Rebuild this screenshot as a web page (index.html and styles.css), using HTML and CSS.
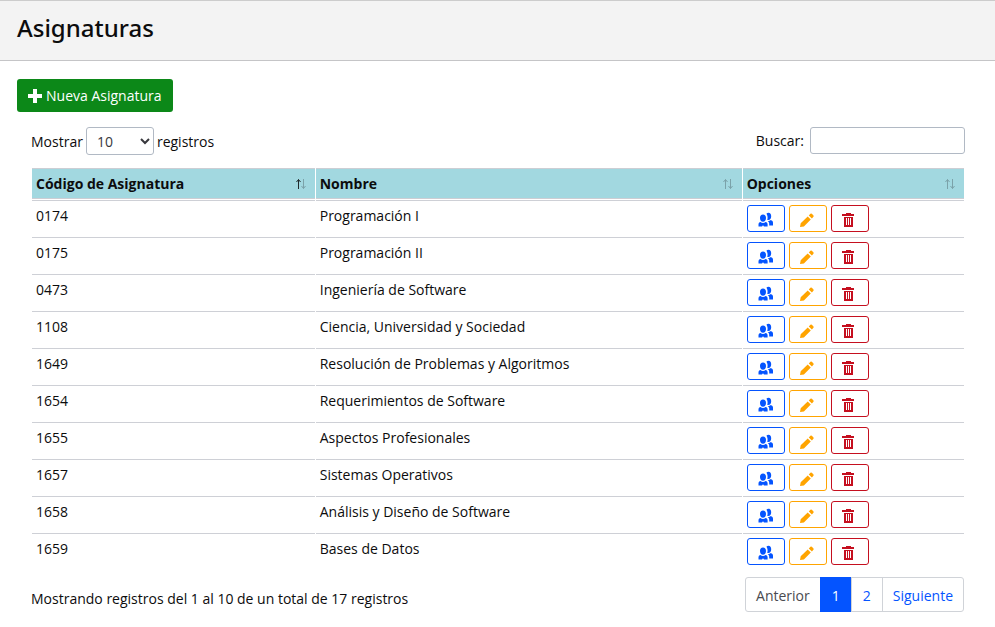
FILE: index.html
```html
<!DOCTYPE html>
<html lang="es">
<head>
<meta charset="utf-8">
<title>Asignaturas</title>
<link rel="stylesheet" href="styles.css">
</head>
<body>
<svg class="sprite" aria-hidden="true">
  <symbol id="users" viewBox="0 0 16 16"><path d="M5 2.4C6.9 2.4 8 3.8 8 5.9C8 8 6.8 9.8 5 9.8C3.2 9.8 2 8 2 5.9C2 3.8 3.1 2.4 5 2.4ZM8.4 1.7C9 1.1 9.7.8 10.5.8C12.2.8 13.2 2.2 13.2 4.2C13.2 6.3 12.1 8 10.4 8C10 8 9.6 7.9 9.2 7.7C9.5 7 9.6 6.4 9.6 5.7C9.6 4 9.2 2.6 8.4 1.7ZM.5 14.5V12.2C.5 11 1.3 10.2 2.5 10C3.2 10.7 4 11.1 5 11.1C6 11.1 6.8 10.7 7.5 10C8.9 10.3 9.6 11 9.6 12.2V14.5H6L5 13.2L4 14.5ZM11.2 13.6V11.8C11.2 10.6 10.7 9.8 9.8 9.2C11.1 9.2 12 8.8 12.7 8.1C14.2 8.5 15 9.3 15 10.8V13.6Z"/></symbol>
  <symbol id="pencil" viewBox="0 0 16 16"><path d="M0 15L.7 11.2L7.7 4.4L10.8 7.5L3.9 14.5ZM8.8 3.4L10.4 1.8Q11.1 1.1 11.8 1.8L13.5 3.5Q14 4.2 13.4 4.8L11.9 6.4Z"/></symbol>
  <symbol id="trash" viewBox="0 0 16 16"><path fill-rule="evenodd" d="M4 1H9V2H12V4H0V2H4ZM2 5H11V15H2ZM4 6V13H5V6ZM6 6V13H7V6ZM8 6V13H9V6Z"/></symbol>
  <symbol id="sort" viewBox="0 0 12 12"><path class="up" d="M3.5 11V1.5M1.5 4L3.5 1.5L5.5 4"/><path class="down" d="M8.5 1V10.5M6.5 8L8.5 10.5L10.5 8"/></symbol>
</svg>
<header class="page-header"><h1>Asignaturas</h1></header>
<main>
  <button class="new" type="button"><svg viewBox="0 0 14 14" aria-hidden="true"><path d="M5 0H9V5H14V9H9V14H5V9H0V5H5Z"/></svg>Nueva Asignatura</button>
  <section class="list">
    <div class="tools">
      <label>Mostrar <select><option>10</option><option>25</option><option>50</option></select> registros</label>
      <label class="search">Buscar: <input type="search"></label>
    </div>
    <table>
      <colgroup><col class="code"><col class="name"><col class="options"></colgroup>
      <thead><tr>
        <th class="sorted"><div>Código de Asignatura<svg><use href="#sort"/></svg></div></th>
        <th><div>Nombre<svg><use href="#sort"/></svg></div></th>
        <th><div>Opciones<svg><use href="#sort"/></svg></div></th>
      </tr></thead>
      <tbody>
        <tr><td>0174</td><td>Programación I</td><td><div class="actions"><button class="blue" aria-label="Usuarios"><svg><use href="#users"/></svg></button><button class="orange" aria-label="Editar"><svg><use href="#pencil"/></svg></button><button class="red" aria-label="Eliminar"><svg><use href="#trash"/></svg></button></div></td></tr>
        <tr><td>0175</td><td>Programación II</td><td><div class="actions"><button class="blue" aria-label="Usuarios"><svg><use href="#users"/></svg></button><button class="orange" aria-label="Editar"><svg><use href="#pencil"/></svg></button><button class="red" aria-label="Eliminar"><svg><use href="#trash"/></svg></button></div></td></tr>
        <tr><td>0473</td><td>Ingeniería de Software</td><td><div class="actions"><button class="blue" aria-label="Usuarios"><svg><use href="#users"/></svg></button><button class="orange" aria-label="Editar"><svg><use href="#pencil"/></svg></button><button class="red" aria-label="Eliminar"><svg><use href="#trash"/></svg></button></div></td></tr>
        <tr><td>1108</td><td>Ciencia, Universidad y Sociedad</td><td><div class="actions"><button class="blue" aria-label="Usuarios"><svg><use href="#users"/></svg></button><button class="orange" aria-label="Editar"><svg><use href="#pencil"/></svg></button><button class="red" aria-label="Eliminar"><svg><use href="#trash"/></svg></button></div></td></tr>
        <tr><td>1649</td><td>Resolución de Problemas y Algoritmos</td><td><div class="actions"><button class="blue" aria-label="Usuarios"><svg><use href="#users"/></svg></button><button class="orange" aria-label="Editar"><svg><use href="#pencil"/></svg></button><button class="red" aria-label="Eliminar"><svg><use href="#trash"/></svg></button></div></td></tr>
        <tr><td>1654</td><td>Requerimientos de Software</td><td><div class="actions"><button class="blue" aria-label="Usuarios"><svg><use href="#users"/></svg></button><button class="orange" aria-label="Editar"><svg><use href="#pencil"/></svg></button><button class="red" aria-label="Eliminar"><svg><use href="#trash"/></svg></button></div></td></tr>
        <tr><td>1655</td><td>Aspectos Profesionales</td><td><div class="actions"><button class="blue" aria-label="Usuarios"><svg><use href="#users"/></svg></button><button class="orange" aria-label="Editar"><svg><use href="#pencil"/></svg></button><button class="red" aria-label="Eliminar"><svg><use href="#trash"/></svg></button></div></td></tr>
        <tr><td>1657</td><td>Sistemas Operativos</td><td><div class="actions"><button class="blue" aria-label="Usuarios"><svg><use href="#users"/></svg></button><button class="orange" aria-label="Editar"><svg><use href="#pencil"/></svg></button><button class="red" aria-label="Eliminar"><svg><use href="#trash"/></svg></button></div></td></tr>
        <tr><td>1658</td><td>Análisis y Diseño de Software</td><td><div class="actions"><button class="blue" aria-label="Usuarios"><svg><use href="#users"/></svg></button><button class="orange" aria-label="Editar"><svg><use href="#pencil"/></svg></button><button class="red" aria-label="Eliminar"><svg><use href="#trash"/></svg></button></div></td></tr>
        <tr><td>1659</td><td>Bases de Datos</td><td><div class="actions"><button class="blue" aria-label="Usuarios"><svg><use href="#users"/></svg></button><button class="orange" aria-label="Editar"><svg><use href="#pencil"/></svg></button><button class="red" aria-label="Eliminar"><svg><use href="#trash"/></svg></button></div></td></tr>
      </tbody>
    </table>
    <footer>
      <p>Mostrando registros del 1 al 10 de un total de 17 registros</p>
      <nav aria-label="Paginación"><a class="disabled" href="#">Anterior</a><a class="current" href="#">1</a><a href="#">2</a><a href="#">Siguiente</a></nav>
    </footer>
  </section>
</main>
</body>
</html>
```
FILE: styles.css
```css
* { box-sizing: border-box; }
body { margin: 0; background: #fff; color: #0c0c0d; font: 14px/21px "Open Sans", "Noto Sans", sans-serif; }
button, input, select { font: inherit; }
svg { fill: currentColor; flex: none; }
.sprite { position: absolute; width: 0; height: 0; }
.page-header { padding: 11px 17px 17px; background: #f3f3f3; border-top: 1px solid #ccc; border-bottom: 1px solid #c5c5c7; }
h1 { margin: 0; font-family: "Noto Sans", sans-serif; font-size: 24px; line-height: 31px; font-weight: 500; }
main { padding: 18px 17px; }
.new { display: flex; align-items: center; gap: 4px; height: 33px; padding: 0 11px; border: 0; border-radius: 3px; background: #0c8818; color: #fff; }
.new svg { width: 14px; height: 14px; }
.list { padding: 15px 13px 0 14px; }
.tools { display: flex; justify-content: space-between; align-items: flex-start; margin-bottom: 12px; }
.tools label { display: flex; align-items: center; gap: 3px; }
.tools .search { gap: 6px; }
select { width: 68px; height: 28px; padding: 0 6px; border: 1px solid #b1b9c4; border-radius: 3px; background: #fff; color: #38383d; }
input { width: 155px; height: 27px; padding: 4px 8px; border: 1px solid #b1b9c4; border-radius: 3px; background: #fff; }
table { width: 100%; table-layout: fixed; border-collapse: separate; border-spacing: 1px; }
.code { width: 30.4%; }
.name { width: 45.8%; }
.options { width: 23.8%; }
th { padding: 4px; text-align: left; font-weight: 700; background: #a2d8e0; border-top: 1px solid #ccced4; border-bottom: 1px solid #ccced4; }
th div { display: flex; justify-content: space-between; align-items: center; }
th svg { width: 12px; height: 12px; margin-right: 4px; fill: none; stroke: #7ba2a9; }
th.sorted svg { stroke: #7ba2a9; --up: #202a2c; }
.up { stroke: var(--up, #7ba2a9); }
td { padding: 4px; border-top: 1px solid #ced0d6; vertical-align: top; }
.actions { display: flex; gap: 4px; }
.actions button { display: flex; align-items: center; justify-content: center; width: 38px; height: 27px; padding: 2px 0 0; border: 1px solid; border-radius: 3px; background: #fff; }
.actions svg { width: 16px; height: 16px; }
.actions .blue { color: #0454ff; }
.actions .orange { color: #ffa400; }
.actions .red { color: #c50f1f; }
footer { display: flex; justify-content: space-between; align-items: center; padding: 7px 1px 0 0; }
p { margin: 8px 0 0; }
nav { display: flex; }
nav a { min-width: 32px; padding: 8px 10px 6px; margin-left: -1px; border: 1px solid #d0d3d8; line-height: 19px; text-align: center; color: #0454ff; text-decoration: none; }
nav a:first-child { border-radius: 3px 0 0 3px; }
nav a:last-child { border-radius: 0 3px 3px 0; }
nav .disabled { color: #4a4a4f; }
nav .current { background: #0454ff; border-color: #0454ff; color: #fff; }
```
